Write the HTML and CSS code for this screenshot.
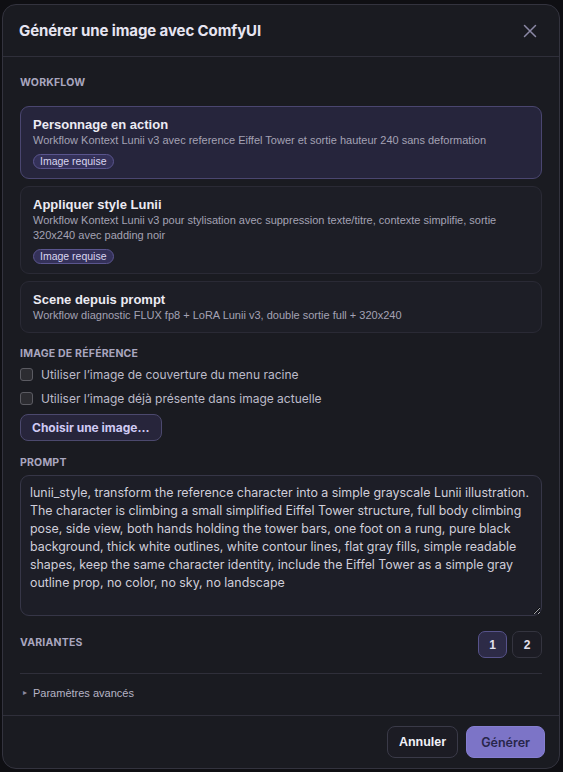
FILE: index.html
```html
<html>
<head>
<meta http-equiv="content-type" content="text/html; charset=utf-8">
<meta name="viewport" content="width=device-width, initial-scale=1">
<link rel="stylesheet" href="styles.css">
<title>Générer une image avec ComfyUI</title>
</head>
<body>
<div class=modal>
<div class=head>
<div class=htitle>Générer une image avec ComfyUI</div>
<button class=close aria-label="Fermer"><svg width="14" height="14" viewBox="0 0 14 14"><path d="M1.5 1.5L12.5 12.5M12.5 1.5L1.5 12.5" stroke="#8b88a5" stroke-width="1.5" stroke-linecap="round"/></svg></button>
</div>
<div class=body>
<div class="label first">Workflow</div>
<div class=cards>
<div class="card sel">
<div class=ctitle>Personnage en action</div>
<div class=cdesc>Workflow Kontext Lunii v3 avec reference Eiffel Tower et sortie hauteur 240 sans deformation</div>
<span class=pill>Image requise</span>
</div>
<div class=card>
<div class=ctitle>Appliquer style Lunii</div>
<div class=cdesc>Workflow Kontext Lunii v3 pour stylisation avec suppression texte/titre, contexte simplifie, sortie 320x240 avec padding noir</div>
<span class=pill>Image requise</span>
</div>
<div class=card>
<div class=ctitle>Scene depuis prompt</div>
<div class=cdesc>Workflow diagnostic FLUX fp8 + LoRA Lunii v3, double sortie full + 320x240</div>
</div>
</div>
<div class="label ref">Image de référence</div>
<label class=check><span class=box></span>Utiliser l’image de couverture du menu racine</label>
<label class="check two"><span class=box></span>Utiliser l’image déjà présente dans image actuelle</label>
<button class=pick>Choisir une image...</button>
<div class="label prm">Prompt</div>
<textarea class=prompt>lunii_style, transform the reference character into a simple grayscale Lunii illustration. The character is climbing a small simplified Eiffel Tower structure, full body climbing pose, side view, both hands holding the tower bars, one foot on a rung, pure black background, thick white outlines, white contour lines, flat gray fills, simple readable shapes, keep the same character identity, include the Eiffel Tower as a simple gray outline prop, no color, no sky, no landscape</textarea>
<div class=variants>
<div class=label>Variantes</div>
<div class=nums><button class="num on">1</button><button class=num>2</button></div>
</div>
<div class=adv><span class=tri>&#9656;</span>Paramètres avancés</div>
</div>
<div class=foot>
<button class=cancel>Annuler</button>
<button class=go>Générer</button>
</div>
</div>
</body>
</html>
```

FILE: styles.css
```css
html,body{margin:0;padding:0}
body{background:#0f0f13;font-family:"Inter","Liberation Sans",sans-serif;color:#d8d6e4}
button{font:inherit;cursor:pointer}
.modal{box-sizing:border-box;width:558px;height:765px;margin:4px 0 0 2px;background:#1a1b21;border:1px solid #33333e;border-radius:14px;display:flex;flex-direction:column}
.head{height:52px;display:flex;align-items:center;justify-content:space-between;padding:0 22px 0 16px;border-bottom:1px solid #2f2f3a;box-sizing:border-box}
.htitle{font-size:15px;font-weight:700;color:#e7e5f1;letter-spacing:-0.1px}
.close{background:none;border:0;padding:0;width:14px;height:14px;display:flex}
.body{padding:0 17px 0 17px;flex:1}
.label{font-size:10.5px;font-weight:700;text-transform:uppercase;color:#a9a6bf;line-height:12px;letter-spacing:0.2px}
.label.first{margin-top:20px}
.cards{margin-top:17px;display:flex;flex-direction:column;gap:7px}
.card{border:1px solid #2a2a35;background:#1d1e26;border-radius:9px;padding:10px 12px 9px 12px;font-family:"Liberation Sans",Arial,sans-serif}
.card.sel{background:#26253c;border-color:#4a4670}
.ctitle{font-size:13px;font-weight:700;color:#ecebf3;line-height:16px}
.cdesc{font-size:11px;color:#a4a2b4;line-height:15px}
.pill{display:inline-block;vertical-align:top;margin-top:6px;height:15px;line-height:13px;box-sizing:border-box;padding:0 6px;font-size:10.5px;color:#d9d6f0;background:#343159;border:1px solid #5a558e;border-radius:8px}
.label.ref{margin-top:15px}
.check{display:flex;align-items:center;gap:8px;margin-top:5px;height:18px;font-size:12px;color:#bdbbca}
.check.two{margin-top:6px}
.box{width:13px;height:13px;box-sizing:border-box;border:1px solid #5b5b62;background:#2c2c31;border-radius:3px;flex:none}
.pick{display:block;margin-top:7px;height:27px;padding:0 11px;background:#27253b;border:1px solid #4c496e;border-radius:8px;color:#cfcaf4;font-size:12px;font-weight:700}
.label.prm{margin-top:16px}
.prompt{display:block;box-sizing:border-box;width:100%;height:141px;margin-top:6px;padding:8px 8px 8px 9px;background:#1d1e27;border:1px solid #363647;border-radius:9px;color:#d0ceda;font-family:"Inter",sans-serif;font-size:12.4px;line-height:18px;resize:vertical;outline:none}
.variants{margin-top:15px;display:flex;justify-content:space-between;align-items:flex-start;padding-bottom:15px;border-bottom:1px solid #2f2f3a}
.variants .label{margin-top:6px}
.nums{display:flex;gap:5px}
.num{width:30px;height:27px;border-radius:7px;border:1px solid #34343f;background:#1c1c24;color:#e2e0ee;font-family:"Liberation Sans",Arial,sans-serif;font-size:12px;font-weight:700;padding:0}
.num.on{background:#2d2b47;border-color:#57538b;width:29px}
.adv{margin-top:12px;font-family:"Liberation Sans",Arial,sans-serif;font-size:11px;color:#b6b4c5;line-height:14px;display:flex;align-items:center}
.tri{font-size:8px;color:#8d8aa0;width:13px;padding-left:3px;box-sizing:border-box}
.foot{border-top:1px solid #2f2f3a;display:flex;justify-content:flex-end;gap:8px;padding:10px 14px 0 0;height:53px;box-sizing:border-box}
.cancel{height:32px;padding:0 11px;background:#1c1c24;border:1px solid #3a3a48;border-radius:8px;color:#f2f1f8;font-family:"Liberation Sans",Arial,sans-serif;font-size:12.5px;font-weight:700}
.go{height:32px;padding:0 14px;background:#7c74c7;border:1px solid #857ed0;border-radius:8px;color:#28264a;font-size:12.5px;font-weight:600}
```
